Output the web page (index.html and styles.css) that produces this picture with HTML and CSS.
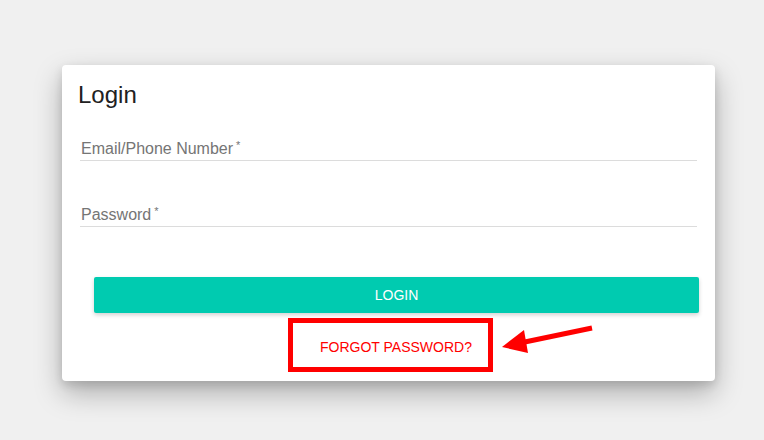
FILE: index.html
```html
<!DOCTYPE html>
<html lang="en">
<head>
<meta charset="utf-8">
<title>Login</title>
<link rel="stylesheet" href="styles.css">
</head>
<body>
<div class="card">
  <h1 class="title">Login</h1>
  <div class="fields">
    <div class="field"><span class="label">Email/Phone Number<span class="req">*</span></span></div>
    <div class="field"><span class="label">Password<span class="req">*</span></span></div>
  </div>
  <div class="actions">
    <button class="login-btn" type="button">LOGIN</button>
  </div>
  <div class="forgot-row">
    <a class="forgot" href="#">FORGOT PASSWORD?</a>
  </div>
  <svg class="arrow" width="100" height="40" viewBox="0 0 100 40">
    <line x1="92" y1="4" x2="20" y2="19" stroke="#ff0000" stroke-width="5" />
    <polygon points="2,23 24,6 28,29" fill="#ff0000" />
  </svg>
</div>
</body>
</html>
```
FILE: styles.css
```css
html, body {
  margin: 0;
  padding: 0;
}
body {
  background: #f0f0f0;
  font-family: "Liberation Sans", Arial, sans-serif;
  width: 764px;
  height: 440px;
  overflow: hidden;
}
.card {
  position: relative;
  margin: 65px 0 0 62px;
  width: 653px;
  box-sizing: border-box;
  padding: 16px 0 9px 0;
  background: #fff;
  border-radius: 4px;
  box-shadow: 0 12px 28px rgba(0, 0, 0, 0.28), 0 4px 10px rgba(0, 0, 0, 0.12);
}
.title {
  margin: 0 0 0 16px;
  font-size: 24px;
  line-height: 28px;
  font-weight: 400;
  color: #212121;
}
.fields {
  display: flex;
  flex-direction: column;
  gap: 31px;
  margin: 17px 18px 0 18px;
}
.field {
  height: 34px;
  border-bottom: 1px solid #dcdcdc;
  display: flex;
  align-items: flex-end;
  padding-left: 1px;
  box-sizing: content-box;
}
.label {
  font-size: 16px;
  line-height: 18px;
  margin-bottom: 2px;
  color: #757575;
}
.req {
  font-size: 11px;
  vertical-align: 5px;
  margin-left: 3px;
}
.actions {
  margin: 50px 16px 0 32px;
}
.login-btn {
  display: block;
  width: 100%;
  height: 36px;
  border: none;
  border-radius: 2px;
  background: #00cbb0;
  color: #fff;
  font-family: "Liberation Sans", Arial, sans-serif;
  font-size: 14px;
  box-shadow: 0 2px 4px rgba(0, 0, 0, 0.18);
  padding: 0;
}
.forgot-row {
  margin-top: 5px;
  padding-left: 226px;
}
.forgot {
  display: block;
  box-sizing: border-box;
  width: 205px;
  height: 54px;
  border: 5px solid #ff0000;
  padding: 16px 0 0 27px;
  font-size: 14px;
  line-height: 16px;
  color: #ff0000;
  text-decoration: none;
}
.arrow {
  position: absolute;
  left: 438px;
  top: 259px;
}
```
